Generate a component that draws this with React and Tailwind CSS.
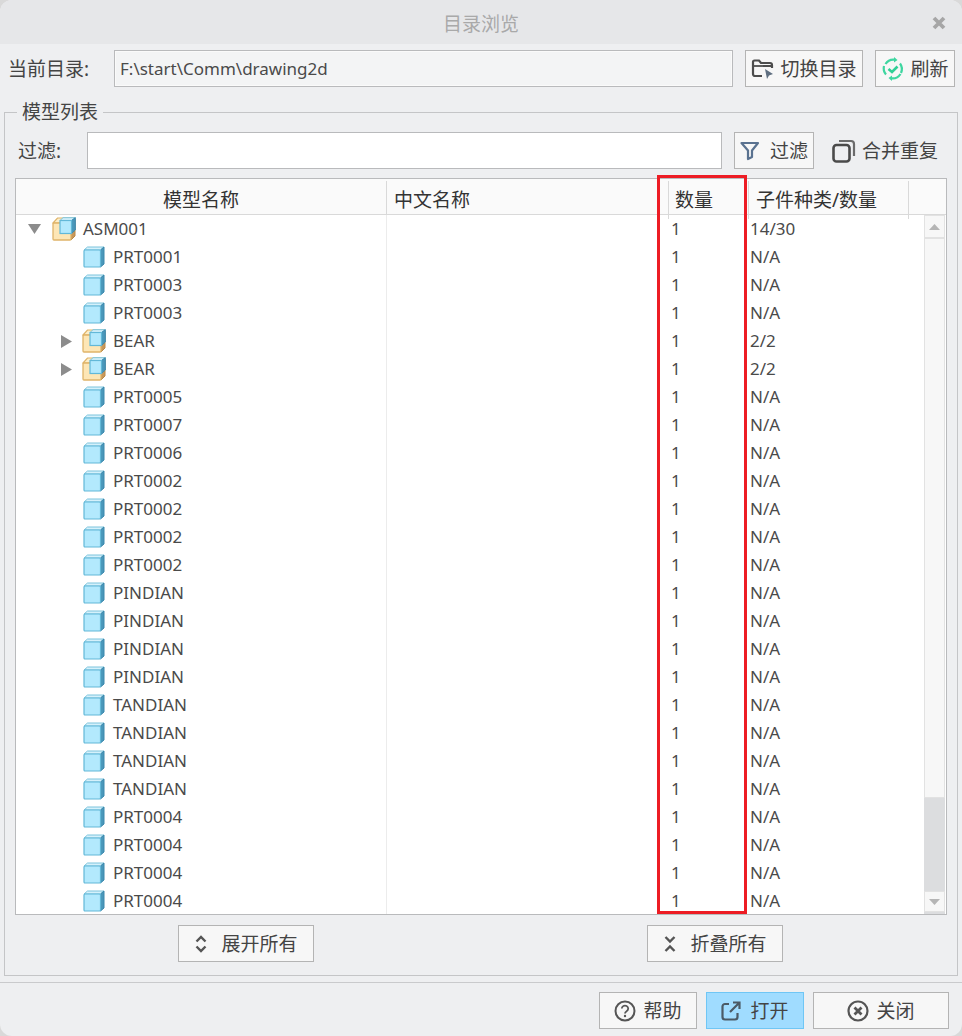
const rows = [
  ['PRT0001', 'leaf', 'N/A'],
  ['PRT0003', 'leaf', 'N/A'],
  ['PRT0003', 'leaf', 'N/A'],
  ['BEAR', 'sub', '2/2'],
  ['BEAR', 'sub', '2/2'],
  ['PRT0005', 'leaf', 'N/A'],
  ['PRT0007', 'leaf', 'N/A'],
  ['PRT0006', 'leaf', 'N/A'],
  ['PRT0002', 'leaf', 'N/A'],
  ['PRT0002', 'leaf', 'N/A'],
  ['PRT0002', 'leaf', 'N/A'],
  ['PRT0002', 'leaf', 'N/A'],
  ['PINDIAN', 'leaf', 'N/A'],
  ['PINDIAN', 'leaf', 'N/A'],
  ['PINDIAN', 'leaf', 'N/A'],
  ['PINDIAN', 'leaf', 'N/A'],
  ['TANDIAN', 'leaf', 'N/A'],
  ['TANDIAN', 'leaf', 'N/A'],
  ['TANDIAN', 'leaf', 'N/A'],
  ['TANDIAN', 'leaf', 'N/A'],
  ['PRT0004', 'leaf', 'N/A'],
  ['PRT0004', 'leaf', 'N/A'],
  ['PRT0004', 'leaf', 'N/A'],
  ['PRT0004', 'leaf', 'N/A'],
]

function PartIcon() {
  return (
    <svg width="22" height="22" viewBox="0 0 22 22" className="shrink-0">
      <path d="M1 4 L4.5 1 H21 L17.5 4 Z" fill="#d5f1fb" stroke="#7cc4dd" strokeWidth="1" />
      <path d="M17.5 4 L21 1 V18 L17.5 21 Z" fill="#4a97ba" stroke="#3a88ad" strokeWidth="1" />
      <rect x="1" y="4" width="16.5" height="17" rx="1" fill="#b3e9fd" stroke="#62b8d8" strokeWidth="1.2" />
    </svg>
  )
}

function AsmIcon() {
  return (
    <svg width="24" height="24" viewBox="0 0 24 24" className="shrink-0">
      <path d="M1 6 L5.5 1 H22 L19 6 Z" fill="#fdeec9" stroke="#dfb469" strokeWidth="1.2" />
      <path d="M19 6 L23 2 V19 L19 23 Z" fill="#c9975a" stroke="#b98a48" strokeWidth="1" />
      <rect x="1" y="6" width="18" height="17" rx="1" fill="#fde6b6" stroke="#dfb469" strokeWidth="1.3" />
      <path d="M8 3.5 L11 0.7 H23.3 L20 3.5 Z" fill="#d5f1fb" stroke="#7cc4dd" strokeWidth="1" />
      <path d="M19.5 3.5 L23.3 0.7 V13 L19.5 16.5 Z" fill="#4a97ba" stroke="#3a88ad" strokeWidth="1" />
      <rect x="8" y="3.5" width="11.5" height="13" fill="#b3e9fd" stroke="#62b8d8" strokeWidth="1.2" />
    </svg>
  )
}

function FolderIcon() {
  return (
    <svg width="24" height="24" viewBox="0 0 24 24" fill="none" className="shrink-0">
      <path d="M11 19 H4 a2 2 0 0 1 -2 -2 V5 a1.5 1.5 0 0 1 1.5 -1.5 H8 L10 6 H19 a2 2 0 0 1 2 2 V11" stroke="#4d4d4d" strokeWidth="2.2" />
      <path d="M2 9 H21" stroke="#4d4d4d" strokeWidth="1.8" />
      <path d="M14 12 L22 17 L18 18.5 L16 22 Z" fill="#5f6f80" />
    </svg>
  )
}

function RefreshIcon() {
  return (
    <svg width="24" height="24" viewBox="0 0 24 24" fill="none" className="shrink-0">
      <path d="M4.5 7 A9.5 9.5 0 0 1 14 2.7" stroke="#3ed6a0" strokeWidth="2.2" />
      <path d="M19.5 17 A9.5 9.5 0 0 1 10 21.3" stroke="#3ed6a0" strokeWidth="2.2" />
      <path d="M19 6.5 A9.5 9.5 0 0 1 20 16" stroke="#3ed6a0" strokeWidth="2.2" />
      <path d="M5 17.5 A9.5 9.5 0 0 1 3 9" stroke="#3ed6a0" strokeWidth="2.2" />
      <path d="M13 0 L16.5 3 L13 5.5 Z" fill="#3ed6a0" />
      <path d="M11 18.5 L7.5 21 L11 24 Z" fill="#3ed6a0" />
      <path d="M7.5 12 L11 15 L16.5 9.5" stroke="#2fcf95" strokeWidth="2.6" />
    </svg>
  )
}

function FilterIcon() {
  return (
    <svg width="20" height="20" viewBox="0 0 20 20" fill="none" className="shrink-0">
      <path d="M1.5 2 H18 L12 9.5 V16 L8 18 V9.5 Z" stroke="#5a7290" strokeWidth="2.2" strokeLinejoin="round" />
    </svg>
  )
}

function CopyIcon() {
  return (
    <svg width="24" height="24" viewBox="0 0 24 24" fill="none" className="shrink-0">
      <rect x="1.5" y="6" width="16" height="16.5" rx="3" stroke="#4a4a4a" strokeWidth="2.6" />
      <path d="M7 2 H19 a3 3 0 0 1 3 3 V17" stroke="#6b6b6b" strokeWidth="2.2" />
    </svg>
  )
}

function ExpandIcon() {
  return (
    <svg width="14" height="18" viewBox="0 0 14 18" fill="none" className="shrink-0">
      <path d="M2.5 6.5 L7 2 L11.5 6.5" stroke="#555" strokeWidth="2.4" />
      <path d="M2.5 11.5 L7 16 L11.5 11.5" stroke="#555" strokeWidth="2.4" />
    </svg>
  )
}

function CollapseIcon() {
  return (
    <svg width="14" height="18" viewBox="0 0 14 18" fill="none" className="shrink-0">
      <path d="M2.5 2 L7 6.5 L11.5 2" stroke="#555" strokeWidth="2.4" />
      <path d="M2.5 16 L7 11.5 L11.5 16" stroke="#555" strokeWidth="2.4" />
    </svg>
  )
}

function HelpIcon() {
  return (
    <svg width="22" height="22" viewBox="0 0 22 22" fill="none" className="shrink-0">
      <circle cx="11" cy="11" r="9.5" stroke="#555" strokeWidth="2" />
      <path d="M7.8 8.6 a3.2 3 0 1 1 4.8 2.6 c-1 .6 -1.6 1.1 -1.6 2.3" stroke="#555" strokeWidth="1.8" />
      <circle cx="11" cy="16" r="1.2" fill="#555" />
    </svg>
  )
}

function OpenIcon() {
  return (
    <svg width="20" height="20" viewBox="0 0 20 20" fill="none" className="shrink-0">
      <path d="M8 3 H4 a2.5 2.5 0 0 0 -2.5 2.5 V16 a2.5 2.5 0 0 0 2.5 2.5 H14 a2.5 2.5 0 0 0 2.5 -2.5 V12" stroke="#4b5a66" strokeWidth="2.2" />
      <path d="M9 11 L18 2 M12 1.5 H18.5 V8" stroke="#4b5a66" strokeWidth="2.2" />
    </svg>
  )
}

function CloseCircleIcon() {
  return (
    <svg width="22" height="22" viewBox="0 0 22 22" fill="none" className="shrink-0">
      <circle cx="11" cy="11" r="9.5" stroke="#555" strokeWidth="2.2" />
      <path d="M7.5 7.5 L14.5 14.5 M14.5 7.5 L7.5 14.5" stroke="#555" strokeWidth="2.8" />
    </svg>
  )
}

function TreeCell({ kind, name }) {
  if (kind === 'root') {
    return (
      <div className="flex items-center pl-[12px]">
        <svg width="13" height="10" viewBox="0 0 13 10" className="mr-[11px]"><path d="M0 0 H13 L6.5 10 Z" fill="#8c8c8c" /></svg>
        <AsmIcon />
        <span className="ml-[7px]">{name}</span>
      </div>
    )
  }
  if (kind === 'sub') {
    return (
      <div className="flex items-center pl-[45px]">
        <svg width="11" height="13" viewBox="0 0 11 13" className="mr-[10px]"><path d="M0 0 L11 6.5 L0 13 Z" fill="#8c8c8c" /></svg>
        <AsmIcon />
        <span className="ml-[7px]">{name}</span>
      </div>
    )
  }
  return (
    <div className="flex items-center pl-[67px]">
      <PartIcon />
      <span className="ml-[8px]">{name}</span>
    </div>
  )
}

function TreeRow({ kind, name, kids }) {
  return (
    <div className="grid grid-cols-[370px_282px_80px_175px] h-[28px] items-center">
      <TreeCell kind={kind} name={name} />
      <div className="h-full border-l border-[#ececec]" />
      <div className="pl-[3px]">1</div>
      <div className="pl-[2px]">{kids}</div>
    </div>
  )
}

export default function App() {
  const btn = 'flex items-center justify-center h-[37px] border border-[#b4b4b4] bg-[#f7f7f7] text-[#444]'
  return (
    <div className="w-[962px] h-[1036px] bg-[#d9d9d9] font-['Noto_Sans','Noto_Sans_CJK_SC',sans-serif] text-[17px] text-[#4a4a4a]">
      <div className="w-full h-full bg-[#eeeff1] rounded-[12px] overflow-hidden flex flex-col">
        {/* title bar */}
        <div className="h-[44px] shrink-0 pt-[5px] bg-[#e6e7e9] flex items-center justify-center relative text-[19px] text-[#a9a9a9]">
          目录浏览
          <svg width="14" height="14" viewBox="0 0 14 14" className="absolute right-[16px] top-[16px]">
            <path d="M2 2 L12 12 M12 2 L2 12" stroke="#a6a6a6" strokeWidth="3.8" />
          </svg>
        </div>

        {/* current dir */}
        <div className="flex items-center h-[37px] mt-[6px] pl-[8px] pr-[7px]">
          <span className="w-[106px] mt-[2px] text-[19px] text-[#444]">当前目录:</span>
          <div className="w-[619px] h-[37px] flex items-center pl-[5px] border border-[#b9babc] shadow-[inset_0_0_0_1px_#fafafa] bg-[#f3f4f5]">F:\start\Comm\drawing2d</div>
          <button className={btn + ' w-[118px] ml-[12px] gap-[5px] text-[19px]'}><FolderIcon /><span className="mt-[2px]">切换目录</span></button>
          <button className={btn + ' w-[80px] ml-[12px] gap-[5px] text-[19px]'}><RefreshIcon /><span className="mt-[2px]">刷新</span></button>
        </div>

        {/* model list */}
        <fieldset className="mx-[4px] mt-[12px] h-[877px] border border-[#c4c5c7]">
          <legend className="ml-[12px] px-[5px] h-[26px] leading-[26px] text-[19px] text-[#444]">模型列表</legend>
          <div className="flex items-center h-[37px] mt-[7px] pl-[13px]">
            <span className="w-[69px] mt-[2px] text-[19px] text-[#444]">过滤:</span>
            <div className="w-[635px] h-[37px] border border-[#b9babc] bg-white" />
            <button className={btn + ' w-[80px] ml-[12px] gap-[10px] text-[19px]'}><FilterIcon /><span className="mt-[2px]">过滤</span></button>
            <div className="flex items-center ml-[18px] gap-[6px] text-[19px] text-[#444]"><CopyIcon /><span className="mt-[2px]">合并重复</span></div>
          </div>

          <div className="relative mt-[9px] mx-[10px]">
            <div className="h-[737px] border border-[#b9babc] bg-white flex flex-col">
              <div className="grid grid-cols-[370px_282px_80px_160px_1fr] h-[36px] shrink-0 bg-[#fafafa] border-b border-[#d9d9d9] text-[19px] text-[#333]">
                <div className="mt-[2px] text-center leading-[38px]">模型名称</div>
                <div className="mt-[2px] border-l border-[#d9d9d9] pl-[7px] leading-[38px]">中文名称</div>
                <div className="mt-[2px] border-l border-[#d9d9d9] pl-[6px] leading-[38px]">数量</div>
                <div className="mt-[2px] border-l border-[#d9d9d9] pl-[7px] leading-[38px]">子件种类/数量</div>
                <div className="mt-[2px] border-l border-[#d9d9d9]" />
              </div>
              <div className="flex flex-1 min-h-0">
                <div className="flex-1 overflow-hidden">
                  <TreeRow kind="root" name="ASM001" kids="14/30" />
                  {rows.map((r, i) => <TreeRow key={i} kind={r[1]} name={r[0]} kids={r[2]} />)}
                </div>
                <div className="w-[21px] shrink-0 mr-[1px] flex flex-col bg-[#dcdddf]">
                  <div className="h-[23px] bg-[#f7f7f7] border border-[#e2e2e2] flex items-center justify-center">
                    <svg width="11" height="6" viewBox="0 0 11 6"><path d="M5.5 0 L11 6 H0 Z" fill="#b5b5b5" /></svg>
                  </div>
                  <div className="h-[560px] bg-[#f7f7f7] border border-[#e2e2e2]" />
                  <div className="flex-1" />
                  <div className="h-[21px] mb-[2px] bg-[#f7f7f7] border border-[#e2e2e2] flex items-center justify-center">
                    <svg width="11" height="6" viewBox="0 0 11 6"><path d="M0 0 H11 L5.5 6 Z" fill="#b5b5b5" /></svg>
                  </div>
                </div>
              </div>
            </div>
            {/* highlight box from the annotation */}
            <div className="absolute left-[642px] top-[-3px] w-[90px] h-[739px] border-[3px] border-[#ed1c24] pointer-events-none" />
          </div>

          <div className="flex mt-[10px]">
            <button className={btn + ' w-[136px] ml-[173px] gap-[13px] text-[19px]'}><ExpandIcon /><span className="mt-[2px]">展开所有</span></button>
            <button className={btn + ' w-[136px] ml-[333px] gap-[13px] text-[19px]'}><CollapseIcon /><span className="mt-[2px]">折叠所有</span></button>
          </div>
        </fieldset>

        {/* footer */}
        <div className="mt-[6px] flex-1 border-t border-[#c9cacc] flex justify-end pt-[9px] pr-[13px] text-[19px]">
          <button className={btn + ' w-[98px] gap-[7px]'}><HelpIcon /><span className="mt-[2px]">帮助</span></button>
          <button className="flex items-center justify-center h-[37px] w-[98px] ml-[9px] gap-[9px] border border-[#6fc6f5] bg-[#a0dcff] text-[#444]"><OpenIcon /><span className="mt-[2px]">打开</span></button>
          <button className={btn + ' w-[136px] ml-[9px] gap-[7px]'}><CloseCircleIcon /><span className="mt-[2px]">关闭</span></button>
        </div>
      </div>
    </div>
  )
}
